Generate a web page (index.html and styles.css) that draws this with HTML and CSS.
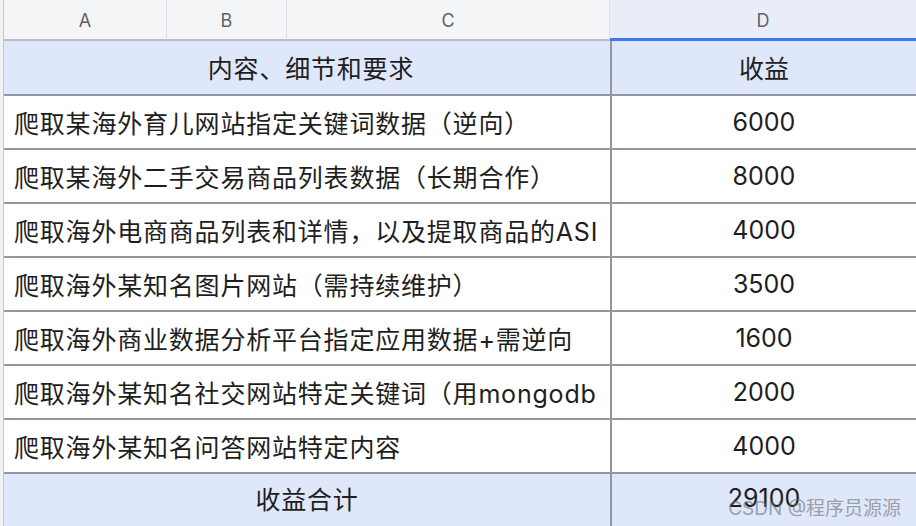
FILE: index.html
```html
<!DOCTYPE html>
<html lang="zh">
<head>
<meta charset="utf-8">
<link rel="stylesheet" href="styles.css">
</head>
<body>
<div class="sheet">
  <div class="gutter"></div>
  <div class="main">
    <div class="cols">
      <div class="col">A</div>
      <div class="col">B</div>
      <div class="col">C</div>
      <div class="col col-sel">D</div>
    </div>
    <div class="row row-head">
      <div class="cell cell-wide center">内容、细节和要求</div>
      <div class="cell center">收益</div>
    </div>
    <div class="row">
      <div class="cell cell-wide">爬取某海外育儿网站指定关键词数据（逆向）</div>
      <div class="cell center">6000</div>
    </div>
    <div class="row">
      <div class="cell cell-wide">爬取某海外二手交易商品列表数据（长期合作）</div>
      <div class="cell center">8000</div>
    </div>
    <div class="row">
      <div class="cell cell-wide">爬取海外电商商品列表和详情，以及提取商品的ASI</div>
      <div class="cell center">4000</div>
    </div>
    <div class="row">
      <div class="cell cell-wide">爬取海外某知名图片网站（需持续维护）</div>
      <div class="cell center">3500</div>
    </div>
    <div class="row">
      <div class="cell cell-wide">爬取海外商业数据分析平台指定应用数据+需逆向</div>
      <div class="cell center">1600</div>
    </div>
    <div class="row">
      <div class="cell cell-wide">爬取海外某知名社交网站特定关键词（用mongodb</div>
      <div class="cell center">2000</div>
    </div>
    <div class="row">
      <div class="cell cell-wide">爬取海外某知名问答网站特定内容</div>
      <div class="cell center">4000</div>
    </div>
    <div class="row row-total">
      <div class="cell cell-wide center">收益合计</div>
      <div class="cell center">29100</div>
    </div>
  </div>
  <div class="watermark">CSDN @程序员源源</div>
</div>
</body>
</html>
```
FILE: styles.css
```css
html, body {
  margin: 0;
  padding: 0;
  background: #ffffff;
  width: 916px;
  height: 526px;
  overflow: hidden;
}

.sheet {
  position: relative;
  display: flex;
  width: 916px;
  height: 526px;
  font-family: Inter, "Noto Sans CJK SC", sans-serif;
  color: #1e1e1e;
}

.gutter {
  width: 3px;
  background: #f1f2f4;
  border-right: 1px solid #c3c7cd;
  flex: none;
}

.main {
  flex: 1;
  display: flex;
  flex-direction: column;
}

.cols {
  display: grid;
  grid-template-columns: 163px 120px 323px 1fr;
  height: 41px;
  flex: none;
}

.col {
  box-sizing: border-box;
  background: #f4f5f7;
  border-right: 1px solid #dcdfe3;
  border-bottom: 2px solid #b9bdc3;
  color: #5f6368;
  font-family: Inter, "Liberation Sans", sans-serif;
  font-size: 18px;
  display: flex;
  align-items: center;
  justify-content: center;
  padding-top: 1px;
}

.col-sel {
  background: #e8edf7;
  border-right: none;
  border-bottom: 3px solid #3c78f0;
  padding-top: 2px;
}

.row {
  display: grid;
  grid-template-columns: 608px 1fr;
  height: 54px;
  box-sizing: border-box;
  border-bottom: 2px solid #92969e;
  flex: none;
}

.row-head {
  height: 55px;
  background: #dfe7fb;
}

.row-total {
  flex: 1;
  height: auto;
  border-bottom: none;
  background: #dfe7fb;
}

.cell {
  display: flex;
  align-items: center;
  font-size: 25px;
  white-space: nowrap;
  overflow: hidden;
  padding-left: 10px;
  padding-bottom: 1px;
  box-sizing: border-box;
}

.cell-wide {
  border-right: 2px solid #92969e;
  letter-spacing: 0.8px;
}

.center {
  justify-content: center;
  padding-left: 0;
}

.row-head .cell-wide {
  padding-left: 8px;
}

.row-total .cell {
  padding-bottom: 4px;
}

.watermark {
  position: absolute;
  right: 15px;
  bottom: 6px;
  font-family: Inter, "Noto Sans CJK SC", sans-serif;
  font-size: 19px;
  color: rgba(110, 110, 115, 0.62);
  white-space: nowrap;
}
```
